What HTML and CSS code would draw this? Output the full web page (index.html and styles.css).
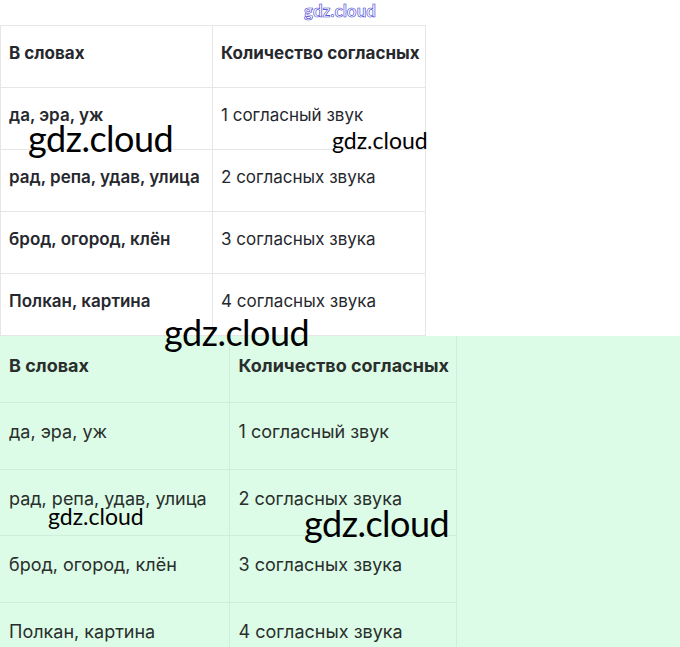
FILE: index.html
```html
<!DOCTYPE html>
<html lang="ru">
<head>
<meta charset="utf-8">
<link rel="stylesheet" href="styles.css">
</head>
<body>
<div class="page">
  <div class="top-mark">gdz.cloud</div>
  <table class="t1">
    <tr><th>В словах</th><th>Количество согласных</th></tr>
    <tr><td class="w">да, эра, уж</td><td>1 согласный звук</td></tr>
    <tr><td class="w">рад, репа, удав, улица</td><td>2 согласных звука</td></tr>
    <tr><td class="w">брод, огород, клён</td><td>3 согласных звука</td></tr>
    <tr><td class="w">Полкан, картина</td><td>4 согласных звука</td></tr>
  </table>
  <div class="green">
    <table class="t2">
      <tr><th>В словах</th><th>Количество согласных</th></tr>
      <tr><td>да, эра, уж</td><td>1 согласный звук</td></tr>
      <tr><td>рад, репа, удав, улица</td><td>2 согласных звука</td></tr>
      <tr><td>брод, огород, клён</td><td>3 согласных звука</td></tr>
      <tr><td>Полкан, картина</td><td>4 согласных звука</td></tr>
    </table>
  </div>
  <span class="wm wm1">gdz.cloud</span>
  <span class="wm wm2">gdz.cloud</span>
  <span class="wm wm3">gdz.cloud</span>
  <span class="wm wm4">gdz.cloud</span>
  <span class="wm wm5">gdz.cloud</span>
</div>
</body>
</html>
```

FILE: styles.css
```css
html, body {
  margin: 0;
  padding: 0;
  background: #ffffff;
}
.page {
  position: relative;
  width: 680px;
  height: 647px;
  overflow: hidden;
  font-family: Inter, "Noto Sans", sans-serif;
}
.top-mark {
  height: 25px;
  display: flex;
  justify-content: center;
  align-items: flex-start;
  font-family: Lato, sans-serif;
  font-weight: 700;
  font-size: 17px;
  line-height: 22px;
  color: #ffffff;
  -webkit-text-stroke: 0.6px #3535d0;
}
table {
  border-collapse: collapse;
  table-layout: fixed;
}
.t1 {
  width: 426px;
  height: 311px;
  color: #26282e;
  font-size: 17px;
}
.t1 th, .t1 td {
  border: 1px solid #e6e6e6;
  text-align: left;
  vertical-align: middle;
  padding: 0 8px 8px;
  height: 62px;
  box-sizing: border-box;
  white-space: nowrap;
}
.t1 th:first-child, .t1 td:first-child { width: 212px; }
.t1 th { font-weight: 700; }
.t1 td { font-weight: 400; }
.t1 td.w { font-weight: 600; }
.green {
  background: #dcfce7;
  height: 311px;
}
.t2 {
  width: 457px;
  color: #2a2e2c;
  font-size: 18px;
}
.t2 th, .t2 td {
  border: 1px solid #cdeed8;
  border-top: none;
  border-left: none;
  text-align: left;
  vertical-align: middle;
  padding: 0 9px 8px;
  height: 66.5px;
  box-sizing: border-box;
  white-space: nowrap;
}
.t2 th:first-child, .t2 td:first-child { width: 229px; }
.t2 th { font-weight: 700; }
.t2 td { font-weight: 400; }
.wm {
  position: absolute;
  font-family: Lato, sans-serif;
  color: #000;
  line-height: 1;
  white-space: nowrap;
}
.wm1 { left: 28px; top: 120px; font-size: 36px; letter-spacing: -0.5px; }
.wm2 { left: 332px; top: 129px; font-size: 23px; }
.wm3 { left: 164px; top: 314px; font-size: 36px; letter-spacing: -0.5px; }
.wm4 { left: 48px; top: 505px; font-size: 23px; }
.wm5 { left: 304px; top: 505px; font-size: 36px; letter-spacing: -0.5px; }
```
